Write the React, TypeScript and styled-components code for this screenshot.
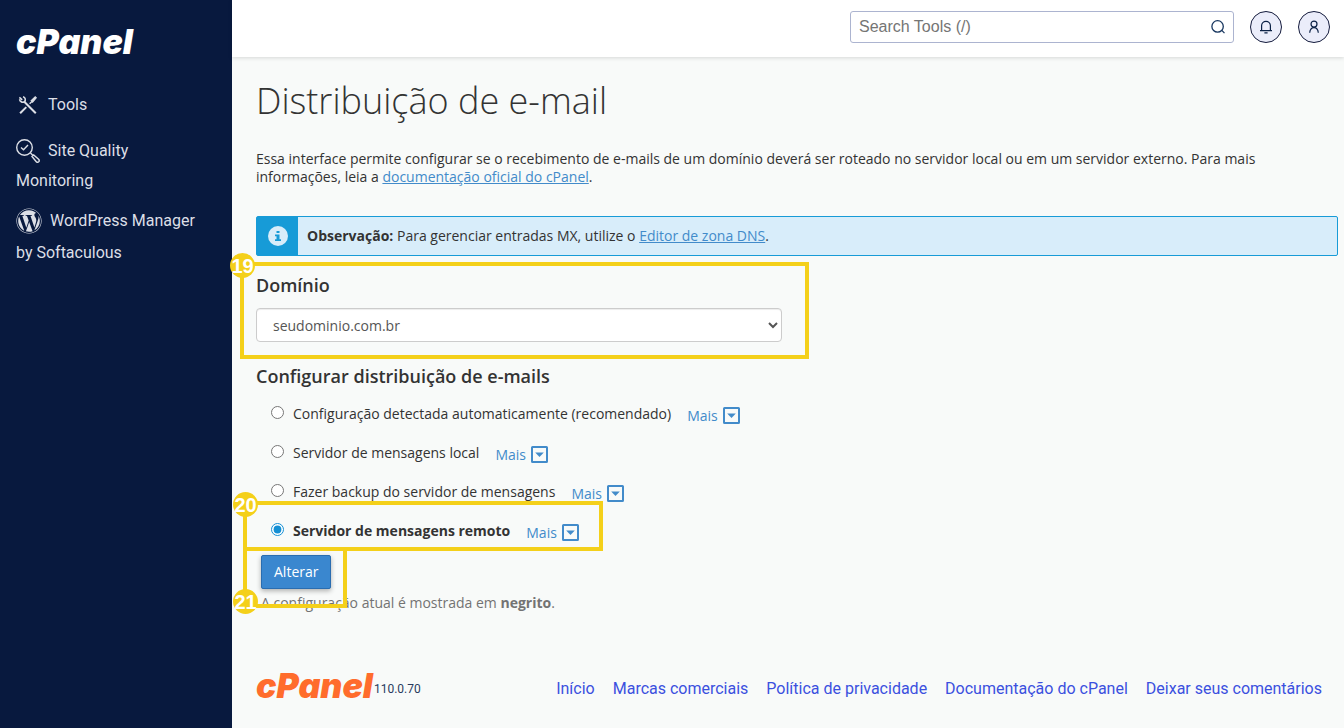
import React from "react";
import styled, { createGlobalStyle } from "styled-components";
import { FaWordpress } from "react-icons/fa";

const GlobalStyle = createGlobalStyle`
  *, *::before, *::after { box-sizing: border-box; }
  body {
    margin: 0;
    background: #f8faf9;
    color: #333;
    font-family: "Open Sans", "Noto Sans", sans-serif;
    font-size: 14px;
    line-height: 18px;
  }
`;

const Shell = styled.div`
  display: flex;
  min-height: 100vh;
`;

const Sidebar = styled.nav`
  flex: 0 0 232px;
  padding: 25px 34px 24px 16px;
  background: #08193e;
  color: #dcdfe6;
  font-family: Roboto, sans-serif;
  font-size: 16px;
`;

const Wordmark = styled.a<{ $color: string }>`
  display: block;
  color: ${(p) => p.$color};
  font: italic 900 34px/34px Inter, sans-serif;
  text-decoration: none;
`;

const Menu = styled.ul`
  list-style: none;
  margin: 30px 0 0;
  padding: 0;
`;

const MenuItem = styled.li<{ $lead: number; $gap: number }>`
  line-height: ${(p) => p.$lead}px;
  margin-bottom: ${(p) => p.$gap}px;
`;

const MenuLink = styled.a`
  color: inherit;
  text-decoration: none;
  svg {
    display: inline-block;
    vertical-align: middle;
    margin: -2px 8px 0 0;
  }
`;

const Page = styled.div`
  flex: 1;
  min-width: 0;
`;

const TopBar = styled.header`
  display: flex;
  justify-content: flex-end;
  align-items: center;
  gap: 16px;
  height: 57px;
  padding: 0 14px 4px 24px;
  background: #fff;
  box-shadow: 0 1px 4px rgba(0, 0, 0, 0.14);
`;

const SearchBox = styled.form`
  display: flex;
  align-items: center;
  width: 384px;
  height: 32px;
  border: 1px solid #acb4d0;
  border-radius: 3px;
  background: #fff;
`;

const SearchInput = styled.input`
  flex: 1;
  min-width: 0;
  padding: 0 8px;
  border: 0;
  outline: 0;
  background: none;
  font: 16px/24px "Liberation Sans", Arial, sans-serif;
  &::placeholder { color: #757575; opacity: 1; }
`;

const SearchButton = styled.button`
  display: flex;
  padding: 0 7px;
  border: 0;
  background: none;
  color: #17365f;
`;

const RoundButton = styled.button`
  display: flex;
  align-items: center;
  justify-content: center;
  width: 32px;
  height: 32px;
  padding: 0;
  border: 1px solid #141b3c;
  border-radius: 50%;
  background: #ebedfa;
  color: #0b2145;
`;

const Main = styled.main`
  padding: 20px 6px 0 24px;
`;

const Title = styled.h1`
  margin: 0;
  font-size: 36px;
  font-weight: 300;
  line-height: 48px;
`;

const Intro = styled.p`
  margin: 25px 0 30px;
`;

const Link = styled.a`
  color: #428bca;
  text-decoration: underline;
`;

const Notice = styled.div`
  display: flex;
  min-height: 40px;
  border: 1px solid #179bd7;
  border-radius: 2px;
  background: #d8edfa;
`;

const NoticeIcon = styled.div`
  display: flex;
  align-items: center;
  justify-content: center;
  width: 41px;
  background: #179bd7;
`;

const NoticeText = styled.p`
  margin: 0;
  padding: 10px 9px;
`;

const Section = styled.section`
  position: relative;
`;

const Heading = styled.h2`
  margin: 0;
  font-size: 18px;
  font-weight: 600;
  line-height: 24px;
`;

const DomainField = styled.div`
  width: 50%;
  padding: 17px 15px 22px 0;
`;

const DomainSelect = styled.select`
  display: block;
  width: 100%;
  height: 34px;
  margin-top: 11px;
  padding: 0 12px;
  border: 1px solid #ccc;
  border-radius: 4px;
  background: #fff;
  box-shadow: inset 0 1px 1px rgba(0, 0, 0, 0.075);
  color: #555;
  font: inherit;
`;

const Options = styled.div`
  padding: 6px 0 0 14px;
`;

const OptionRow = styled.div`
  position: relative;
  display: flex;
  align-items: center;
  height: 39px;
`;

const OptionLabel = styled.label<{ $bold: boolean }>`
  display: flex;
  align-items: center;
  font-weight: ${(p) => (p.$bold ? 700 : 400)};
  input {
    width: 13px;
    height: 13px;
    margin: 0 9px 2px 1px;
    accent-color: #148fd4;
  }
`;

const MoreButton = styled.button`
  display: flex;
  align-items: center;
  gap: 5px;
  margin: 4px 0 0 16px;
  padding: 0;
  border: 0;
  background: none;
  color: #428bca;
  font: inherit;
`;

const Submit = styled.div`
  position: relative;
  padding: 5px 0 5px 5px;
`;

const SubmitButton = styled.button`
  display: block;
  height: 34px;
  padding: 0 12px;
  border: 1px solid #2a6db0;
  border-radius: 2px;
  background: #3a87cf;
  box-shadow: 0 2px 5px rgba(0, 0, 0, 0.3);
  color: #fff;
  font: inherit;
`;

const Hint = styled.p`
  margin: 0 0 0 5px;
  color: #737373;
`;

const Marker = styled.div<{ $top: number; $left: number; $width: string; $height: number }>`
  position: absolute;
  top: ${(p) => p.$top}px;
  left: ${(p) => p.$left}px;
  width: ${(p) => p.$width};
  height: ${(p) => p.$height}px;
  border: 4px solid #f4d01a;
  pointer-events: none;
`;

const MarkerBadge = styled.span<{ $end?: boolean }>`
  position: absolute;
  left: -14px;
  ${(p) => (p.$end ? "bottom: -10px;" : "top: -13px;")}
  width: 25px;
  height: 25px;
  border-radius: 50%;
  background: #f4d01a;
  color: #fff;
  font: bold 20px/26px "Liberation Sans", Arial, sans-serif;
  text-align: center;
`;

const Footer = styled.footer`
  display: flex;
  align-items: flex-end;
  justify-content: space-between;
  padding: 57px 22px 22px 24px;
  font-family: Roboto, sans-serif;
  line-height: 28px;
`;

const Brand = styled.div`
  display: flex;
  align-items: flex-end;
  gap: 1px;
  color: #293a5e;
  font-size: 12px;
`;

const FooterLinks = styled.div`
  display: flex;
  gap: 18px;
  a {
    color: #3b50df;
    font-size: 16px;
    text-decoration: none;
  }
`;

const ToolsIcon = () => (
  <svg width="24" height="24" viewBox="0 0 24 24" fill="none" stroke="currentColor">
    <path d="M8.3 8.8L19.8 20.3" strokeWidth="2" />
    <path d="M3.6 6.2C3.8 8.6 6.2 9.9 8.3 8.8C10.1 7.2 9.4 4.3 7 3.7" strokeWidth="1.6" />
    <path d="M3.4 4.4L6.2 6.8" strokeWidth="1.6" />
    <path d="M10.3 14.1L4.1 20.3" strokeWidth="2" />
    <path d="M13.6 10.8L16 8.4" strokeWidth="1.4" />
    <path d="M15.2 7.6L19.2 3.9L20.2 4.9L16.6 9Z" strokeWidth="1.2" fill="currentColor" />
  </svg>
);

const QualityIcon = () => (
  <svg width="24" height="24" viewBox="0 0 24 24" fill="none" stroke="currentColor" strokeWidth="1.4">
    <circle cx="8.5" cy="8.5" r="7.8" />
    <path d="M5 8.5L7.5 10.8L12 6" />
    <path d="M14.5 14L17 16.5" />
    <path d="M16 17.5L17.7 16L22.8 20.5Q23.8 22 22.5 23Q21.2 23.8 20.3 22.7Z" />
  </svg>
);

const SearchIcon = () => (
  <svg width="16" height="16" viewBox="0 0 16 16" fill="none" stroke="currentColor" strokeWidth="1.3">
    <circle cx="7.6" cy="7.4" r="5.7" />
    <path d="M11.8 11.4L14.5 14.1" />
  </svg>
);

const BellIcon = () => (
  <svg width="16" height="16" viewBox="0 0 16 16" fill="none" stroke="currentColor" strokeWidth="1.2">
    <path d="M2 11.6H14M3.6 11.6V6.8A4.4 4.4 0 0 1 12.4 6.8V11.6M6.4 13.8H9.6" />
  </svg>
);

const UserIcon = () => (
  <svg width="16" height="16" viewBox="0 0 16 16" fill="none" stroke="currentColor" strokeWidth="1.2">
    <circle cx="8" cy="5.1" r="3" />
    <path d="M3.7 13.8C4 10.2 5.6 8.6 8 8.6C10.4 8.6 12 10.2 12.3 13.8" />
  </svg>
);

const InfoIcon = () => (
  <svg width="20" height="20" viewBox="0 0 20 20">
    <circle cx="10" cy="10" r="10" fill="#d8edfa" />
    <path d="M8.5 5h3v2h-3zM7 8.4h4.5v4.8H13v1.8H7v-1.8h1.5v-3H7z" fill="#179bd7" />
  </svg>
);

const MoreIcon = () => (
  <svg width="17" height="17" viewBox="0 0 17 17">
    <rect x="1" y="1" width="15" height="15" rx="0.5" fill="none" stroke="#428bca" strokeWidth="2" />
    <path d="M4.2 6.5H12.8L8.5 11Z" fill="#428bca" />
  </svg>
);

const routes = [
  { id: "auto", label: "Configuração detectada automaticamente (recomendado)" },
  { id: "local", label: "Servidor de mensagens local" },
  { id: "backup", label: "Fazer backup do servidor de mensagens" },
  { id: "remote", label: "Servidor de mensagens remoto" },
];

const footerLinks = [
  "Início",
  "Marcas comerciais",
  "Política de privacidade",
  "Documentação do cPanel",
  "Deixar seus comentários",
];

export default function App() {
  return (
    <>
      <GlobalStyle />
      <Shell>
        <Sidebar>
          <Wordmark href="#" $color="#fff">cPanel</Wordmark>
          <Menu>
            <MenuItem $lead={32} $gap={15}>
              <MenuLink href="#"><ToolsIcon />Tools</MenuLink>
            </MenuItem>
            <MenuItem $lead={30} $gap={9}>
              <MenuLink href="#"><QualityIcon />Site Quality Monitoring</MenuLink>
            </MenuItem>
            <MenuItem $lead={32} $gap={0}>
              <MenuLink href="#"><FaWordpress size={26} />WordPress Manager by Softaculous</MenuLink>
            </MenuItem>
          </Menu>
        </Sidebar>
        <Page>
          <TopBar>
            <SearchBox role="search">
              <SearchInput type="text" placeholder="Search Tools (/)" aria-label="Search Tools" />
              <SearchButton type="button" aria-label="Search"><SearchIcon /></SearchButton>
            </SearchBox>
            <RoundButton type="button" aria-label="Notifications"><BellIcon /></RoundButton>
            <RoundButton type="button" aria-label="Account"><UserIcon /></RoundButton>
          </TopBar>
          <Main>
            <Title>Distribuição de e-mail</Title>
            <Intro>
              Essa interface permite configurar se o recebimento de e-mails de um domínio deverá ser roteado no
              servidor local ou em um servidor externo. Para mais informações, leia a{" "}
              <Link href="#">documentação oficial do cPanel</Link>.
            </Intro>
            <Notice>
              <NoticeIcon><InfoIcon /></NoticeIcon>
              <NoticeText>
                <strong>Observação:</strong> Para gerenciar entradas MX, utilize o{" "}
                <Link href="#">Editor de zona DNS</Link>.
              </NoticeText>
            </Notice>
            <Section>
              <DomainField>
                <Heading as="label" htmlFor="domain">Domínio</Heading>
                <DomainSelect id="domain" defaultValue="seudominio.com.br">
                  <option>seudominio.com.br</option>
                </DomainSelect>
              </DomainField>
              <Marker $top={6} $left={-16} $width="calc(50% + 28px)" $height={97}>
                <MarkerBadge>19</MarkerBadge>
              </Marker>
            </Section>
            <Section>
              <Heading id="routing">Configurar distribuição de e-mails</Heading>
              <Options role="radiogroup" aria-labelledby="routing">
                {routes.map((route) => (
                  <OptionRow key={route.id}>
                    <OptionLabel $bold={route.id === "remote"}>
                      <input type="radio" name="route" value={route.id} defaultChecked={route.id === "remote"} />
                      {route.label}
                    </OptionLabel>
                    <MoreButton type="button">Mais<MoreIcon /></MoreButton>
                    {route.id === "remote" && (
                      <Marker $top={-10} $left={-27} $width="360px" $height={50}>
                        <MarkerBadge>20</MarkerBadge>
                      </Marker>
                    )}
                  </OptionRow>
                ))}
              </Options>
              <Submit>
                <SubmitButton type="button">Alterar</SubmitButton>
                <Marker $top={-3} $left={-13} $width="104px" $height={61}>
                  <MarkerBadge $end>21</MarkerBadge>
                </Marker>
              </Submit>
              <Hint>A configuração atual é mostrada em <strong>negrito</strong>.</Hint>
            </Section>
          </Main>
          <Footer>
            <Brand>
              <Wordmark href="#" $color="#ff6c2c">cPanel</Wordmark>
              <span>110.0.70</span>
            </Brand>
            <FooterLinks>
              {footerLinks.map((label) => <a key={label} href="#">{label}</a>)}
            </FooterLinks>
          </Footer>
        </Page>
      </Shell>
    </>
  );
}
